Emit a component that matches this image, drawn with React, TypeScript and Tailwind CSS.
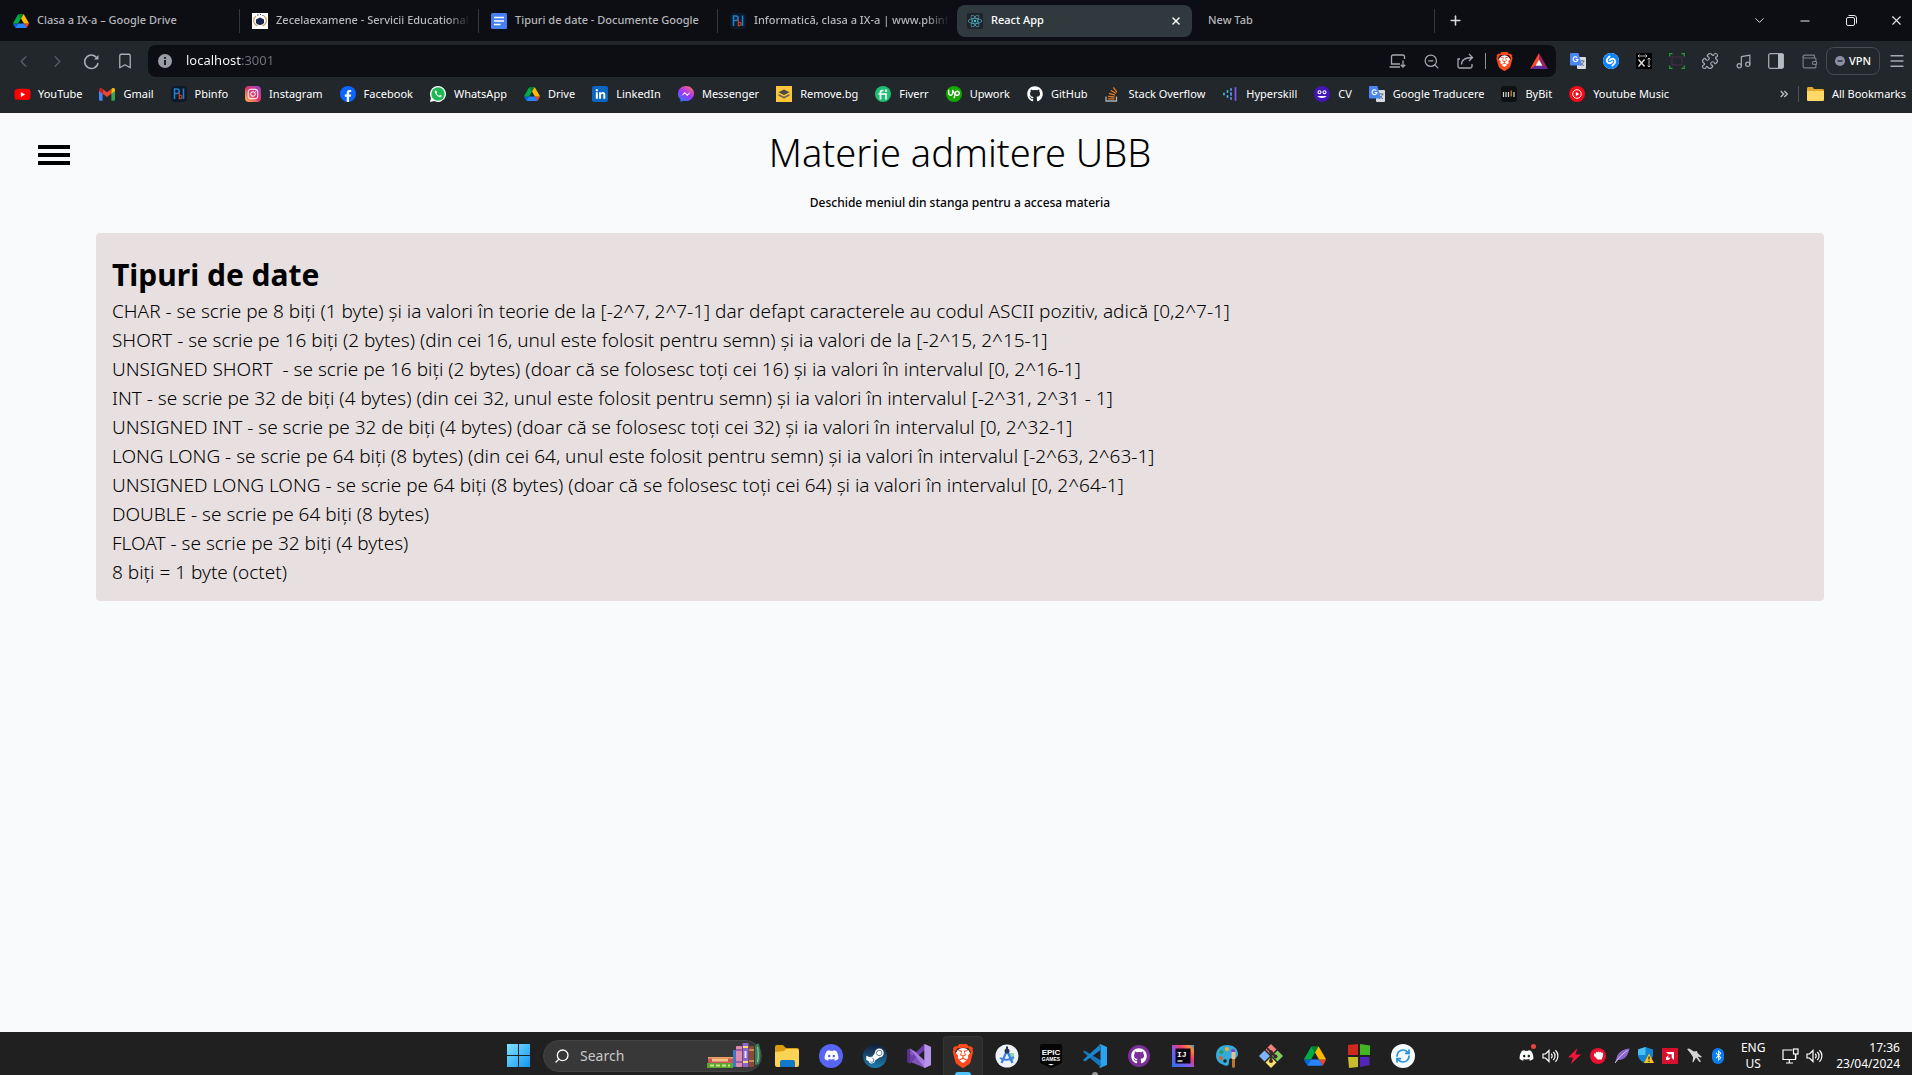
import React from "react";
import {
  FaYoutube, FaInstagram, FaFacebookF, FaLinkedinIn, FaGithub,
  FaReact, FaDiscord, FaSteamSymbol, FaBluetoothB, FaHandRock,
} from "react-icons/fa";
import { SiBrave, SiUpwork, SiShazam } from "react-icons/si";
import {
  Bookmark, ChevronDown, ChevronLeft, ChevronRight, Menu, Minus, Music, Plus, Puzzle, RefreshCw, Search,
  Wallet, X, ZoomOut, Zap,
} from "lucide-react";

type Size = { s?: number };

const Drive = ({ s = 16 }: Size) => (
  <svg width={s} height={s} viewBox="0 -5 87.3 88">
    <path d="m6.6 66.85 3.85 6.65c.8 1.4 1.95 2.5 3.3 3.3l13.75-23.8h-27.5c0 1.55.4 3.1 1.2 4.5z" fill="#0066da" />
    <path d="m43.65 25-13.75-23.8c-1.35.8-2.5 1.9-3.3 3.3l-25.4 44a9.06 9.06 0 0 0-1.2 4.5h27.5z" fill="#00ac47" />
    <path d="m73.55 76.8c1.35-.8 2.5-1.9 3.3-3.3l1.6-2.75 7.65-13.25c.8-1.4 1.2-2.95 1.2-4.5h-27.5l5.85 11.5z" fill="#ea4335" />
    <path d="m43.65 25 13.75-23.8c-1.35-.8-2.9-1.2-4.5-1.2h-18.5c-1.6 0-3.15.45-4.5 1.2z" fill="#00832d" />
    <path d="m59.8 53h-32.3l-13.75 23.8c1.35.8 2.9 1.2 4.5 1.2h50.8c1.6 0 3.15-.45 4.5-1.2z" fill="#2684fc" />
    <path d="m73.4 26.5-12.7-22c-.8-1.4-1.95-2.5-3.3-3.3l-13.75 23.8 16.15 28h27.45c0-1.55-.4-3.1-1.2-4.5z" fill="#ffba00" />
  </svg>
);

const Brave = ({ s = 18 }: Size) => (
  <svg width={s} height={s} viewBox="0 0 24 24">
    <circle cx="12" cy="11.5" r="7.5" fill="#fff" />
    <SiBrave size={24} color="#fb4a1c" />
  </svg>
);

const Translate = ({ s = 16 }: Size) => (
  <svg width={s} height={s} viewBox="0 0 16 16">
    <rect x="7" y="4" width="9" height="12" rx="1" fill="#d7dade" />
    <path d="M9.5 8h5M12 7v1M13.7 8c-.5 2.300-2 3.700-3.500 4.500M10.500 9.500c.8 1.500 2 2.500 3.500 3.300" stroke="#5f6b78" strokeWidth="0.9" fill="none" />
    <path d="M1 0h7.500l3.300 12.500H1a1 1 0 0 1-1-1V1a1 1 0 0 1 1-1z" fill="#4a86f0" />
    <path d="M7.300 4.600a2.400 2.400 0 1 0 .6 1.900H5.700" stroke="#fff" strokeWidth="1.100" fill="none" />
  </svg>
);

const Pbinfo = () => (
  <svg width="16" height="16" viewBox="0 0 16 16">
    <rect width="16" height="16" rx="4" fill="#0d1a2a" />
    <path d="M3.500 13V3h2.500a2.200 2.200 0 0 1 0 4.500H3.500M12.500 2.500V13" stroke="#1c7fd0" strokeWidth="1.600" fill="none" />
    <path d="M8.300 6v6.500h1.200a1.500 1.500 0 0 0 0-3.200H8" stroke="#b5432a" strokeWidth="1.300" fill="none" />
  </svg>
);

const Disc = ({ bg, children }: { bg: string; children: React.ReactNode }) => (
  <span className={`flex size-4 items-center justify-center overflow-hidden text-white ${bg}`}>{children}</span>
);

const Messenger = () => (
  <svg width="16" height="16" viewBox="0 0 24 24">
    <defs>
      <linearGradient id="msg" x1="0.2" y1="1" x2="0.8" y2="0">
        <stop offset="0" stopColor="#2a7bff" /><stop offset="0.5" stopColor="#a033ff" /><stop offset="1" stopColor="#ff6b6b" />
      </linearGradient>
    </defs>
    <path d="M12 0C5.200 0 0 5 0 11.600c0 3.500 1.400 6.500 3.800 8.600V24l3.700-2c1.400.4 2.900.6 4.500.6 6.800 0 12-4.900 12-11.300S18.800 0 12 0z" fill="url(#msg)" />
    <path d="M5 15l4.800-6 4 3.500L19 9l-4.800 6-4-3.500z" fill="#fff" />
  </svg>
);

const WhatsApp = () => (
  <svg width="16" height="16" viewBox="0 0 16 16">
    <path d="M8 0a8 8 0 1 1-3.700 15.100L0 16l1-4.100A8 8 0 0 1 8 0z" fill="#fff" />
    <circle cx="8" cy="8" r="6.700" fill="#1fb855" />
    <path d="M5.700 4.300c-.9.400-1.200 1.400-.6 2.700 1 2 2.500 3.500 4.600 4.200 1.100.3 2-.3 2.100-1.400L10 8.900l-.9.900C8 9.300 7 8.400 6.500 7.200l.7-.9z" fill="#fff" />
  </svg>
);

const RemoveBg = () => (
  <svg width="16" height="16" viewBox="0 0 16 16">
    <rect width="16" height="16" fill="#fdc53a" />
    <path d="M8 3.500l5.500 2.700L8 9 2.500 6.200z" fill="#4d4a45" />
    <path d="M2.500 8L8 10.500 13.500 8v1.800L8 12.500 2.500 9.800z" fill="#6f675a" />
  </svg>
);

const Hyperskill = () => (
  <svg width="16" height="16" viewBox="0 0 16 16" strokeWidth="1.800" strokeLinecap="round">
    <path d="M13.500 2v12" stroke="#8256e8" /><path d="M9 3v1M9 7v2M9 12v1" stroke="#5a8ff0" />
    <path d="M5.500 5v1M5.500 10v1" stroke="#48b8dc" /><path d="M2 7.500v1" stroke="#48b8dc" />
  </svg>
);

const Cv = () => (
  <svg width="16" height="16" viewBox="0 0 16 16" fill="none" stroke="#fff" strokeWidth="1.100">
    <circle cx="8" cy="8" r="8" fill="#4316b8" stroke="none" />
    <circle cx="5.500" cy="6.200" r="1.500" /><circle cx="10.500" cy="6.200" r="1.500" /><path d="M3.500 10h9c-1 2.600-8 2.600-9 0z" fill="#fff" stroke="none" />
  </svg>
);

const ByBit = () => (
  <svg width="16" height="16" viewBox="0 0 16 16" strokeWidth="1.200">
    <rect width="16" height="16" rx="3" fill="#0f1012" />
    <path d="M2.500 6v5M5 6v5M7.500 6v5M13 6v5" stroke="#d8d8d8" /><path d="M10.200 4.500v6" stroke="#e09a1c" />
  </svg>
);

const YtMusic = () => (
  <svg width="16" height="16" viewBox="0 0 16 16">
    <circle cx="8" cy="8" r="8" fill="#f40b16" /><circle cx="8" cy="8" r="4.300" fill="none" stroke="#fff" /><path d="M6.800 5.800v4.400L10.300 8z" fill="#fff" />
  </svg>
);

const Docs = () => (
  <svg width="16" height="16" viewBox="0 0 16 16">
    <rect width="16" height="16" rx="1.500" fill="#4680f0" /><path d="M3 4.500h10M3 8h10M3 11.500h6.500" stroke="#fff" strokeWidth="1.600" />
  </svg>
);

const Zece = () => (
  <svg width="16" height="16" viewBox="0 0 16 16">
    <rect width="16" height="16" fill="#fff" />
    <path d="M4 3a6.500 6 0 0 0 1.500 10M12 3a6.500 6 0 0 1-1.500 10" stroke="#c9a56a" fill="none" strokeWidth="1.300" />
    <path d="M8 4.500l4 2v3.500c-2 2.500-6 2.500-8 0V6.500z" fill="#17244f" /><path d="M5 2h1.500M8 1.500h1M10.500 2.500h1" stroke="#444" />
  </svg>
);

const StackOverflow = () => (
  <svg width="16" height="16" viewBox="0 0 16 16" fill="none" strokeWidth="1.300">
    <path d="M2 10.500V15h10.500v-4.500" stroke="#a7adb0" />
    <path d="M4 12.800h6.500M4.200 10.300l6.300.7M5 7.300l6 1.900M6.700 4.200l5.200 3.300M9.300 1.300l3.700 5" stroke="#e87922" />
  </svg>
);

const Folder = () => (
  <svg width="17" height="16" viewBox="0 0 17 16">
    <path d="M0 2.500C0 1.700.6 1 1.500 1h4L7 3h8.500c.8 0 1.500.6 1.500 1.400V13.500c0 .8-.7 1.500-1.500 1.500h-14C.6 15 0 14.300 0 13.500z" fill="#e3a92a" />
    <path d="M0 5h17v8.500c0 .8-.7 1.500-1.500 1.500h-14C.6 15 0 14.300 0 13.500z" fill="#ffd866" />
  </svg>
);

const YouTube = () => (
  <span className="flex items-center bg-[radial-gradient(#fff_30%,transparent_31%)]"><FaYoutube size={17} color="#f00" /></span>
);

const Gmail = () => (
  <svg width="16" height="16" viewBox="0 0 24 24">
    <path d="M0 5.500v14.900C0 21.300.7 22 1.600 22h3.800V10.500z" fill="#4285f4" /><path d="M24 5.500v14.900c0 .9-.7 1.600-1.600 1.600h-3.800V10.500z" fill="#34a853" />
    <path d="M5.400 11.700V4.600L12 9.500l6.600-4.900v7.100L12 16.600z" fill="#ea4335" /><path d="M0 5.500C0 3.400 2.300 2.200 4 3.500l1.400 1.100v7.100L0 7.600z" fill="#c5221f" />
    <path d="M24 5.500c0-2.100-2.300-3.300-4-2l-1.400 1.100v7.100L24 7.600z" fill="#fbbc04" />
  </svg>
);

const Fiverr = () => (
  <Disc bg="rounded-full bg-[#1dbf73]">
    <svg width="10" height="11" viewBox="0 0 10 11" fill="none" stroke="#fff" strokeWidth="1.700"><path d="M2.500 10.500V3.200Q2.500 1.500 4.500 1.500H5.500M.5 5H8v5.500" /><circle cx="8" cy="1.700" r=".4" /></svg>
  </Disc>
);

const bookmarks: [string, React.ReactNode][] = [
  ["YouTube", <YouTube />],
  ["Gmail", <Gmail />],
  ["Pbinfo", <Pbinfo />],
  ["Instagram", <Disc bg="rounded bg-linear-to-tr from-[#fdb840] via-[#e1306c] to-[#8a3ac8]"><FaInstagram size={12} /></Disc>],
  ["Facebook", <Disc bg="rounded-full bg-[#0a66ff]"><FaFacebookF size={12} className="mt-1" /></Disc>],
  ["WhatsApp", <WhatsApp />],
  ["Drive", <Drive />],
  ["LinkedIn", <Disc bg="rounded-xs bg-[#0a66c2]"><FaLinkedinIn size={11} /></Disc>],
  ["Messenger", <Messenger />],
  ["Remove.bg", <RemoveBg />],
  ["Fiverr", <Fiverr />],
  ["Upwork", <Disc bg="rounded-full bg-[#14a800]"><SiUpwork size={12} /></Disc>],
  ["GitHub", <FaGithub size={16} color="#fff" />],
  ["Stack Overflow", <StackOverflow />],
  ["Hyperskill", <Hyperskill />],
  ["CV", <Cv />],
  ["Google Traducere", <Translate />],
  ["ByBit", <ByBit />],
  ["Youtube Music", <YtMusic />],
];

const lines = [
  "CHAR - se scrie pe 8 biți (1 byte) și ia valori în teorie de la [-2^7, 2^7-1] dar defapt caracterele au codul ASCII pozitiv, adică [0,2^7-1]",
  "SHORT - se scrie pe 16 biți (2 bytes) (din cei 16, unul este folosit pentru semn) și ia valori de la [-2^15, 2^15-1]",
  "UNSIGNED SHORT  - se scrie pe 16 biți (2 bytes) (doar că se folosesc toți cei 16) și ia valori în intervalul [0, 2^16-1]",
  "INT - se scrie pe 32 de biți (4 bytes) (din cei 32, unul este folosit pentru semn) și ia valori în intervalul [-2^31, 2^31 - 1]",
  "UNSIGNED INT - se scrie pe 32 de biți (4 bytes) (doar că se folosesc toți cei 32) și ia valori în intervalul [0, 2^32-1]",
  "LONG LONG - se scrie pe 64 biți (8 bytes) (din cei 64, unul este folosit pentru semn) și ia valori în intervalul [-2^63, 2^63-1]",
  "UNSIGNED LONG LONG - se scrie pe 64 biți (8 bytes) (doar că se folosesc toți cei 64) și ia valori în intervalul [0, 2^64-1]",
  "DOUBLE - se scrie pe 64 biți (8 bytes)",
  "FLOAT - se scrie pe 32 biți (4 bytes)",
  "8 biți = 1 byte (octet)",
];

function Tab({ icon, label, active, divider, fade }: { icon?: React.ReactNode; label: string; active?: boolean; divider?: boolean; fade?: boolean }) {
  return (
    <div className={`flex h-full max-w-[239px] flex-1 items-center py-1 ${active ? "pr-1" : ""}`}>
      <div className={`flex h-8 min-w-0 flex-1 items-center gap-2 pr-2 ${active ? "rounded-lg bg-[#30393d] pl-2.5 text-white" : "pl-3 text-[#b4b7bb]"}`}>
        {icon}
        <button className={`min-w-0 flex-1 text-left whitespace-nowrap ${fade ? "mask-[linear-gradient(90deg,#000_88%,transparent)]" : ""}`}>{label}</button>
        {active && <button aria-label="Close tab" className="flex size-4 items-center justify-center text-white"><X size={12} strokeWidth={3} /></button>}
      </div>
      {divider && <span className="h-6 w-px bg-[#34373b]" />}
    </div>
  );
}

function TabStrip() {
  return (
    <div className="flex h-[41px] items-center bg-[#0d0e13]">
      <div className="flex h-full flex-1 items-center pl-px">
        <Tab icon={<Drive />} label="Clasa a IX-a – Google Drive" divider />
        <Tab icon={<Zece />} label="Zecelaexamene - Servicii Educational" fade divider />
        <Tab icon={<Docs />} label="Tipuri de date - Documente Google" divider />
        <Tab icon={<Pbinfo />} label="Informatică, clasa a IX-a | www.pbinf" fade />
        <Tab icon={<span className="flex size-4 items-center justify-center rounded-xs bg-[#20232a]"><FaReact size={14} color="#4fb3c8" /></span>} label="React App" active />
        <Tab label="New Tab" divider />
        <button aria-label="New tab" className="ml-3 flex size-4 items-center justify-center text-[#d5d7da]"><Plus size={15} strokeWidth={2.5} /></button>
      </div>
      <div className="flex items-center text-[#e6e7e8]">
        <button aria-label="Search tabs" className="flex w-[46px] justify-center"><ChevronDown size={15} strokeWidth={1.5} /></button>
        <button aria-label="Minimize" className="flex w-[46px] justify-center"><Minus size={14} strokeWidth={2} /></button>
        <button aria-label="Restore" className="flex w-[46px] justify-center">
          <svg width="11" height="11" viewBox="0 0 11 11" fill="none" stroke="currentColor"><rect x=".5" y="2.500" width="8" height="8" rx="1.500" /><path d="M2.500.5h5.500a2.500 2.500 0 0 1 2.500 2.500v5.500" /></svg>
        </button>
        <button aria-label="Close" className="flex w-[38px] justify-end pr-2"><X size={15} strokeWidth={1.8} /></button>
      </div>
    </div>
  );
}

function Toolbar() {
  const nav = "flex w-[34px] justify-center";
  const ext = "flex w-[33px] justify-center text-[#a3abb0]";
  return (
    <div className="flex items-center bg-[#22272b] pt-1 pl-1.5">
      <button aria-label="Back" className={`${nav} text-[#596066]`}><ChevronLeft size={19} strokeWidth={1.5} /></button>
      <button aria-label="Forward" className={`${nav} text-[#596066]`}><ChevronRight size={19} strokeWidth={1.5} /></button>
      <button aria-label="Reload" className={`${nav} text-[#a8b0b5]`}>
        <svg width="17" height="17" viewBox="0 0 17 17" fill="none" stroke="currentColor" strokeWidth="1.500"><path d="M14.500 6A6.700 6.700 0 1 0 15 10" /><path d="M11 6.500h4.500V2z" fill="currentColor" stroke="none" /></svg>
      </button>
      <button aria-label="Bookmark this page" className={`${nav} text-[#a8b0b5]`}><Bookmark size={18} strokeWidth={1.7} /></button>
      <div className="ml-1.5 flex h-8 flex-1 items-center rounded-lg bg-[#0d0e13] pl-2.5">
        <svg width="14" height="14" viewBox="0 0 14 14"><circle cx="7" cy="7" r="7" fill="#9a9ca3" /><path d="M7 6v5M7 3v1.700" stroke="#0d0e13" strokeWidth="1.800" /></svg>
        <input aria-label="Address" defaultValue="localhost:3001" className="ml-3.5 flex-1 bg-[linear-gradient(90deg,#fff_56px,#71747a_56px)] bg-clip-text text-[13px] font-normal text-transparent outline-none" />
        <div className="flex items-center text-[#a5a8ae]">
          <button aria-label="Install" className={nav}><svg width="17" height="16" viewBox="0 0 17 16" fill="none" stroke="currentColor" strokeWidth="1.300"><path d="M15.500 6V3.500A1.500 1.500 0 0 0 14 2H4a1.500 1.500 0 0 0-1.500 1.500V11H11M.5 14H11M14 7.500V14M11.800 11.800 14 14l2.200-2.200" /></svg></button>
          <button aria-label="Zoom" className={nav}><ZoomOut size={17} strokeWidth={1.7} /></button>
          <button aria-label="Share" className={nav}><svg width="17" height="16" viewBox="0 0 17 16" fill="none" stroke="currentColor" strokeWidth="1.300"><path d="M3 6H1v7.500A1.500 1.500 0 0 0 2.500 15h11a1.500 1.500 0 0 0 1.500-1.500V11M4.500 11.500C4.500 7 8 4.500 15.500 4.500M12 1l3.500 3.500L12 8" /></svg></button>
          <span className="mx-0.5 h-4 w-px bg-[#8d9096]" />
          <button aria-label="Brave Shields" className={nav}><Brave s={19} /></button>
          <button aria-label="Brave Rewards" className={nav}>
            <svg width="18" height="17" viewBox="0 0 18 17"><path d="M9 0L0 16l6-3.500L9 7z" fill="#ff4724" /><path d="M9 0l9 16-6-3.500L9 7z" fill="#9e1f63" /><path d="M0 16h18l-6-3.500H6z" fill="#5b2e9b" /><path d="M9 6.500L5.500 12.700h7z" fill="#fff" /></svg>
          </button>
        </div>
      </div>
      <div className="ml-1.5 flex items-center">
        <button aria-label="Translate" className={ext}><Translate /></button>
        <button aria-label="Shazam" className={ext}><span className="flex size-4 items-center justify-center rounded-full bg-white"><SiShazam size={16} color="#0a85ff" /></span></button>
        <button aria-label="XPath" className={ext}><svg width="16" height="16" viewBox="0 0 16 16" stroke="#ddd" fill="none"><rect width="16" height="16" fill="#000" stroke="none" /><path d="M2.500 6.500l6 7M8.500 6.500l-6 7" strokeWidth="1.400" /><path d="M2 3h9M3.500 1.500L2 3l1.500 1.500M9.500 1.500L11 3 9.500 4.500M13 5v9M11.500 6.500L13 5l1.500 1.500M11.500 12.500L13 14l1.500-1.500" strokeWidth=".8" /></svg></button>
        <button aria-label="Capture" className={ext}><svg width="16" height="16" viewBox="0 0 16 16" fill="none"><rect x="3" y="4" width="10" height="8" stroke="#5d3350" strokeWidth=".7" /><path d="M.7 3.500V.7h2.800M12.500.7h2.800v2.800M15.300 12.500v2.800h-2.800M3.500 15.300H.7v-2.800" stroke="#2d9a35" strokeWidth="1.200" /></svg></button>
        <button aria-label="Extensions" className={ext}><Puzzle size={18} strokeWidth={1.6} /></button>
        <button aria-label="Playlist" className={ext}><Music size={17} strokeWidth={1.7} /></button>
        <button aria-label="Sidebar" className={ext}><svg width="16" height="16" viewBox="0 0 16 16"><rect x=".7" y=".7" width="14.600" height="14.600" rx="1.500" fill="none" stroke="currentColor" strokeWidth="1.300" /><rect x="10" y="1" width="5.500" height="14" fill="#b3bcc3" /></svg></button>
        <button aria-label="Wallet" className={ext}><Wallet size={17} strokeWidth={1.6} color="#7a8288" /></button>
        <button className="flex h-7 items-center gap-1 rounded-lg border border-[#454b50] px-2 text-[11px] font-medium text-white">
          <svg width="10" height="10" viewBox="0 0 10 10"><circle cx="5" cy="5" r="5" fill="#8d8fa5" /><path d="M2.500 5h5" stroke="#22272b" strokeWidth="1.400" /></svg>
          VPN
        </button>
        <button aria-label="Menu" className="ml-2 flex w-6 text-[#a3abb0]"><Menu size={18} strokeWidth={1.7} /></button>
      </div>
    </div>
  );
}

function BookmarksBar() {
  return (
    <nav aria-label="Bookmarks" className="flex h-9 items-center bg-[#22272b] pr-1.5 pb-0.5 pl-3.5 font-normal text-white">
      <div className="flex flex-1 items-center gap-[17px]">
        {bookmarks.map(([label, icon]) => (
          <a key={label} href="#" className="flex items-center gap-2 whitespace-nowrap">
            <span className="flex w-4 shrink-0 items-center justify-center">{icon}</span>
            {label}
          </a>
        ))}
      </div>
      <button aria-label="More bookmarks" className="px-2.5 text-[#b9bfc3]">
        <svg width="8" height="8" viewBox="0 0 8 8" fill="none" stroke="currentColor" strokeWidth="1.300"><path d="M.7 1l3 3-3 3M4.300 1l3 3-3 3" /></svg>
      </button>
      <span className="h-4 w-px bg-[#4a5055]" />
      <button className="ml-2 flex items-center gap-2"><Folder />All Bookmarks</button>
    </nav>
  );
}

function Page() {
  return (
    <main className="flex-1 bg-[#f9fafc] pt-[15px] text-black">
      <header className="flex pr-[30px] pl-[38px]">
        <button aria-label="Deschide meniul" className="mt-[17px] flex h-5 w-8 flex-col justify-between">
          <span className="h-1 w-full bg-black" /><span className="h-1 w-full bg-black" /><span className="h-1 w-full bg-black" />
        </button>
        <div className="flex-1 pr-8 text-center">
          <h1 className="text-[38px] leading-[48px] font-light">Materie admitere UBB</h1>
          <p className="mt-[17px] text-xs leading-5 font-medium">Deschide meniul din stanga pentru a accesa materia</p>
        </div>
      </header>
      <article className="mt-5 mr-[88px] ml-24 rounded bg-[#e8e0e0] px-4 pt-5 pb-3.5">
        <h2 className="text-[30px] leading-[44px] font-bold">Tipuri de date</h2>
        {lines.map((l) => <p key={l} className="text-[19px] leading-[29px] font-light whitespace-pre-wrap">{l}</p>)}
      </article>
    </main>
  );
}

const Round = ({ bg, children }: { bg: string; children: React.ReactNode }) => (
  <span className={`flex size-6 items-center justify-center rounded-full text-white ${bg}`}>{children}</span>
);

const apps: [string, React.ReactNode, string?][] = [
  ["File Explorer", (
    <svg width="24" height="22" viewBox="0 0 24 22">
      <path d="M0 2a2 2 0 0 1 2-2h6l3 3h11a2 2 0 0 1 2 2v4H0z" fill="#d99b12" /><path d="M0 7l9-1 2-2h11a2 2 0 0 1 2 2v14a2 2 0 0 1-2 2H2a2 2 0 0 1-2-2z" fill="#fcd354" />
      <path d="M5 22v-5a2 2 0 0 1 2-2h11a2 2 0 0 1 2 2v5z" fill="#1478c8" />
    </svg>
  )],
  ["Discord", <Round bg="bg-[#5865f2]"><FaDiscord size={15} /></Round>],
  ["Steam", <Round bg="bg-linear-to-b from-[#101d3a] to-[#1a7fb0]"><FaSteamSymbol size={20} /></Round>],
  ["Visual Studio", (
    <svg width="24" height="24" viewBox="0 0 24 24">
      <path d="M0 6l3-1.500 15 14.500v5L2.500 17.500z" fill="#8a5cc8" opacity=".9" /><path d="M0 6v12l3 1.500L17.500 6V0L5 12z" fill="#6b3fa8" /><path d="M0 6l3-1.500V19.500L0 18z" fill="#55308c" />
      <path d="M17.500 0L24 3v18l-6.500 3L3 4.500l5 3 9.500 9V6.500z" fill="#a77be0" /><path d="M17.500 0L24 3v18l-6.500 3z" fill="#b794ec" />
    </svg>
  )],
  ["Brave", <Brave s={24} />, "h-[3px] w-4 bg-[#4cc2ff]"],
  ["Android Studio", (
    <svg width="24" height="24" viewBox="0 0 24 24">
      <circle cx="12" cy="12" r="11.500" fill="#eef2f7" /><path d="M13 9h6v6a2 2 0 0 1-2 2h-2z" fill="#86dca8" />
      <path d="M12 6.500L6.500 19M12 6.500L17.500 19" stroke="#3d7de8" strokeWidth="2.200" /><path d="M5 14c4 2.500 10 2.500 14-1" stroke="#3d7de8" strokeWidth="2" fill="none" />
      <circle cx="12" cy="7" r="2.500" fill="#22344e" /><path d="M12 2.500v3" stroke="#22344e" strokeWidth="2" />
    </svg>
  )],
  ["Epic Games", (
    <svg width="22" height="24" viewBox="0 0 22 24" fontFamily="'Liberation Sans', sans-serif" fontWeight="bold" fill="#fff" textAnchor="middle">
      <path d="M2 0h18a2 2 0 0 1 2 2v17l-11 5-11-5V2a2 2 0 0 1 2-2z" fill="#050505" /><text x="11" y="11" fontSize="8">EPIC</text><text x="11" y="17" fontSize="5">GAMES</text>
      <path d="M8 20h6l-3 1.500z" />
    </svg>
  )],
  ["Visual Studio Code", (
    <svg width="24" height="24" viewBox="0 0 24 24">
      <path d="M1.500 6.500L0 8l17 14.500 1-6z" fill="#1277bd" /><path d="M17 0l7 3v18l-7 3-1-1.500c.8.300 1.500-.2 1.500-1V2.500c0-.8-.7-1.300-1.500-1z" fill="#2aa4f0" /><path d="M0 16l16.500-15L17.500 6 2 17.500z" fill="#1a86d0" />
    </svg>
  ), "h-[3px] w-1.5 bg-[#9a9a9a]"],
  ["GitHub Desktop", <span className="flex size-[22px] items-center justify-center rounded-full bg-[#7a2f9c] text-white"><FaGithub size={16} /></span>],
  ["IntelliJ IDEA", (
    <svg width="22" height="22" viewBox="0 0 22 22">
      <defs><linearGradient id="ij" x1="0" y1="1" x2="1" y2="0"><stop offset="0" stopColor="#2a72f0" /><stop offset=".4" stopColor="#7a5cf0" /><stop offset=".65" stopColor="#f03a78" /><stop offset=".85" stopColor="#fc8a2e" /><stop offset="1" stopColor="#2a9af0" /></linearGradient></defs>
      <rect width="22" height="22" fill="url(#ij)" /><rect x="3.500" y="3.500" width="15" height="15" fill="#0a0410" />
      <text x="5" y="11.500" fontSize="8" fill="#fff" fontWeight="bold" fontFamily="'Liberation Mono', monospace">IJ</text><path d="M5.500 16h5" stroke="#fff" strokeWidth="1.300" />
    </svg>
  )],
  ["Paint", (
    <svg width="24" height="24" viewBox="0 0 24 24">
      <path d="M12 1c7 0 11 4 11 9 0 3-2 4-5 4-4 0-4 2-4 4 0 3-1 4.500-4 3.500C5 20 1 17 1 11.500 1 5 6 1 12 1z" fill="#35aadc" />
      <circle cx="6" cy="14" r="2" fill="#d8642c" /><circle cx="6.500" cy="8" r="2" fill="#2f9b46" /><circle cx="12" cy="5" r="2" fill="#f0b429" /><circle cx="18" cy="7" r="2" fill="#8a3fc0" /><circle cx="10" cy="17" r="1.800" fill="#222" />
      <path d="M16.500 8h4v7h-4z" fill="#e3c392" /><path d="M17 15h3v8l-1.500 1L17 23z" fill="#b8762e" />
    </svg>
  )],
  ["Git", (
    <svg width="24" height="24" viewBox="0 0 24 24">
      <path d="M12 0l5.500 5.500L12 11 6.500 5.500z" fill="#f08080" /><path d="M5.500 6.500L11 12l-5.500 5.500L0 12z" fill="#80b4f8" /><path d="M18.500 6.500L24 12l-5.500 5.500L13 12z" fill="#80d060" /><path d="M12 13l5.500 5.500L12 24l-5.500-5.500z" fill="#f8e070" />
      <path d="M8 4l4 4v9M12 8l4 4" stroke="#3a2a20" strokeWidth="1.800" fill="none" /><circle cx="12" cy="8" r="1.800" fill="#3a2a20" /><circle cx="12" cy="17" r="2" fill="#3a2a20" /><circle cx="16.500" cy="12.500" r="2" fill="#3a2a20" />
    </svg>
  )],
  ["Google Drive", <Drive s={22} />],
  ["Code::Blocks", (
    <svg width="22" height="24" viewBox="0 0 22 24">
      <path d="M0 1l10-1v11H0z" fill="#d0281c" /><path d="M12 0l10 1.500V11H12z" fill="#45b522" /><path d="M0 13h10v10l-9 1z" fill="#c8bb2c" /><path d="M12 13h9.500v8L12 23z" fill="#5126b8" />
    </svg>
  )],
  ["Sync", <span className="flex size-6 items-center justify-center rounded-full bg-[#f5fafd]"><RefreshCw size={16} color="#2a8fd8" strokeWidth={2.6} /></span>],
];

const Speaker = () => (
  <svg width="17" height="14" viewBox="0 0 17 14" fill="none" stroke="currentColor" strokeWidth="1.200"><path d="M1 5h2.500L7 1.500v11L3.500 9H1z" /><path d="M9.200 4.800a3 3 0 0 1 0 4.400M11.300 3a5.500 5.500 0 0 1 0 8M13.500 1.300a8 8 0 0 1 0 11.400" /></svg>
);

const Books = () => (
  <svg width="54" height="25" viewBox="0 0 54 25">
    <rect x="1" y="14" width="25" height="6" rx="1" fill="#c9585a" /><rect x="5" y="15.500" width="16" height="3" fill="#f2c188" /><path d="M1 14h25v1.500H1z" fill="#eaa35a" />
    <rect x="0" y="20" width="26" height="5" fill="#5aa832" /><path d="M3 22.500h20" stroke="#cfe38a" strokeWidth="2" strokeDasharray="4 2" />
    <rect x="26" y="7" width="3" height="17" fill="#3b78c8" /><rect x="29" y="3" width="6" height="21" rx="1" fill="#e08ab0" /><path d="M29 7h6M29 19h6" stroke="#7c4fa0" strokeWidth="1.500" />
    <rect x="35.500" y="0" width="6" height="24" rx="1" fill="#8d66cc" /><path d="M36 4h5M36 19h5" stroke="#ffd873" strokeWidth="2" /><rect x="37.500" y="8" width="2" height="7" fill="#efdcff" />
    <rect x="42" y="3" width="5" height="21" rx="1" fill="#8c4a34" /><path d="M42 7h5M42 18h5" stroke="#e0a060" strokeWidth="1.500" /><path d="M48 3c1-2 3-3 4-2 2 6 2 14 0 20l-4 1z" fill="#35805a" /><path d="M50.500 4c1 5 1 11 0 15" stroke="#9fd0a0" fill="none" />
  </svg>
);

const tray: [string, React.ReactNode][] = [
  ["Discord", <span className="relative"><FaDiscord size={15} /><span className="absolute -top-1 -right-0.5 size-[5px] rounded-full bg-[#e8453c]" /></span>],
  ["Volume mixer", <Speaker />],
  ["Power", <svg width="13" height="16" viewBox="0 0 13 16"><path d="M9.500 0L0 9.500h5L3 16l10-9.500H7.500z" fill="#f0143c" /></svg>],
  ["MSI", <span className="flex size-4 items-center justify-center rounded-full bg-[#e8102e]"><FaHandRock size={9} /></span>],
  ["Feather", <svg width="15" height="15" viewBox="0 0 15 15"><path d="M14.500.5C9 .5 3 4 1.500 10L0 15l3-3c5.500.5 10.500-4 11.500-11.500z" fill="#8a66cc" /><path d="M0 15C4 9 8 5.500 12.500 2.500" stroke="#d9c8f5" fill="none" /></svg>],
  ["Windows Security", (
    <svg width="16" height="17" viewBox="0 0 16 17"><path d="M7.500 0L15 2.500V8c0 4-4 7-7.500 8.500C4 15 0 12 0 8V2.500z" fill="#1583d0" /><path d="M7.500 0v8H0V2.500z" fill="#4cc0f5" /><path d="M11 6.500l5 9.500H6z" fill="#fcc21b" /><path d="M11 9.500v3M11 13.700v1.200" stroke="#222" strokeWidth="1.200" /></svg>
  )],
  ["AMD", <svg width="16" height="16" viewBox="0 0 16 16"><rect width="16" height="16" fill="#d8102e" /><path d="M4 4h8v8l-2.300-2.300V6.300H6.300z" fill="#fff" /><path d="M6.300 7.200v2.500h2.500L6.500 12H4V9.500z" fill="#fff" /></svg>],
  ["Flight", <svg width="15" height="15" viewBox="0 0 15 15"><path d="M0 1l2-.500 5 3 3-.500.500 2 4.500 4-1.500.500-3-1 3.500 5-1.500.500L9 9.500 6.500 14l-1 .5L6 9 3 4.500z" fill="#d5d5d5" /></svg>],
  ["Bluetooth", <span className="flex h-4 w-3 items-center justify-center rounded-full bg-[#0a7cf0]"><FaBluetoothB size={11} /></span>],
];

function Taskbar() {
  return (
    <footer className="flex h-[43px] items-center bg-[#202020] pr-3 text-white">
      <div className="w-[496px] min-w-0 shrink" />
      <button aria-label="Start" className="mt-1 flex w-11 justify-center">
        <svg width="23" height="23" viewBox="0 0 23 23"><defs><linearGradient id="win" x1="0" y1="0" x2="1" y2="1"><stop stopColor="#7fe3ff" /><stop offset="1" stopColor="#0f96f0" /></linearGradient></defs><path d="M0 0h11v11H0zM12 0h11v11H12zM0 12h11v11H0zM12 12h11v11H12z" fill="url(#win)" /></svg>
      </button>
      <label className="mt-1 ml-[3px] flex h-8 w-[219px] items-center rounded-full border border-[#434343] bg-[#383838] pl-2.5">
        <Search size={16} strokeWidth={2} className="-scale-x-100" />
        <input aria-label="Search" placeholder="Search" className="ml-2.5 w-0 flex-1 text-sm outline-none placeholder:text-[#c8c8c8]" />
        <Books />
      </label>
      <div className="ml-[3px] flex h-full items-end">
        {apps.map(([name, icon, bar]) => (
          <button key={name} aria-label={name} className={`relative mx-0.5 flex h-[39px] w-10 items-center justify-center ${name === "Brave" ? "rounded-t border border-b-0 border-[#343434] bg-[#2c2c2c]" : ""}`}>
            {icon}
            {bar && <span className={`absolute bottom-0 rounded-t ${bar}`} />}
          </button>
        ))}
      </div>
      <div className="mt-1 ml-auto flex items-center">
        {tray.map(([name, icon]) => <button key={name} aria-label={name} className="flex w-6 justify-center">{icon}</button>)}
        <button className="mx-px w-11 text-center text-xs leading-4">ENG<br />US</button>
        <button aria-label="Network" className="ml-0.5 flex w-6 justify-center"><svg width="17" height="16" viewBox="0 0 17 16" fill="none" stroke="currentColor" strokeWidth="1.200"><path d="M10.500 2H1v9.500h12.500V7M4 15h7M7.300 11.500V15" /><rect x="11.500" y="1" width="4.500" height="5" /><path d="M13.700 6v5" /></svg></button>
        <button aria-label="Volume" className="flex w-6 justify-center"><Speaker /></button>
        <button className="ml-2.5 text-right text-xs leading-4">17:36<br />23/04/2024</button>
      </div>
    </footer>
  );
}

export default function App() {
  return (
    <div className="flex min-h-screen flex-col overflow-hidden font-['Noto_Sans','Open_Sans',sans-serif]">
      <div className="text-[11px] font-medium">
        <TabStrip />
        <Toolbar />
        <BookmarksBar />
      </div>
      <Page />
      <Taskbar />
    </div>
  );
}
